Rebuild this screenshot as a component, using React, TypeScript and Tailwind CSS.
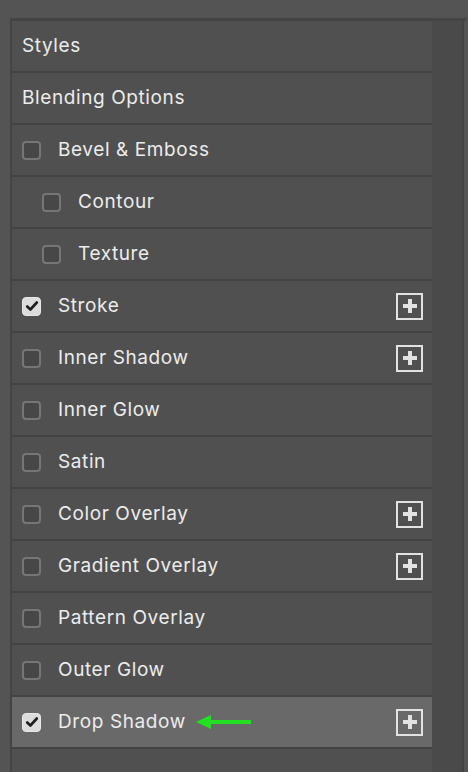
import React from 'react';

type Row = {
  label: string;
  check?: boolean;
  checked?: boolean;
  indent?: boolean;
  plus?: boolean;
  active?: boolean;
};

const rows: Row[] = [
  { label: 'Styles' },
  { label: 'Blending Options' },
  { label: 'Bevel & Emboss', check: true },
  { label: 'Contour', check: true, indent: true },
  { label: 'Texture', check: true, indent: true },
  { label: 'Stroke', check: true, checked: true, plus: true },
  { label: 'Inner Shadow', check: true, plus: true },
  { label: 'Inner Glow', check: true },
  { label: 'Satin', check: true },
  { label: 'Color Overlay', check: true, plus: true },
  { label: 'Gradient Overlay', check: true, plus: true },
  { label: 'Pattern Overlay', check: true },
  { label: 'Outer Glow', check: true },
  { label: 'Drop Shadow', check: true, checked: true, plus: true, active: true },
];

function Checkbox({ checked }: { checked?: boolean }) {
  if (checked) {
    return (
      <span className="w-[19px] h-[19px] rounded-[4px] bg-[#dcdcdc] border border-[#e8e8e8] flex items-center justify-center shrink-0">
        <svg viewBox="0 0 16 16" className="w-[14px] h-[14px]">
          <path d="M2.5 8.5 L6.2 12 L13.5 4" fill="none" stroke="#1e1e1e" strokeWidth="3" strokeLinecap="round" strokeLinejoin="round" />
        </svg>
      </span>
    );
  }
  return <span className="w-[19px] h-[19px] rounded-[4px] bg-[#474747] border-2 border-[#767676] shrink-0" />;
}

function PlusBox() {
  return (
    <span className="ml-auto w-[27px] h-[27px] border-2 border-[#e2e2e2] flex items-center justify-center">
      <svg viewBox="0 0 16 16" className="w-[16px] h-[16px]">
        <path d="M8 1 V15 M1 8 H15" stroke="#e2e2e2" strokeWidth="4" />
      </svg>
    </span>
  );
}

function Arrow() {
  return (
    <svg viewBox="0 0 56 16" className="w-[56px] h-[16px] ml-[10px]">
      <path d="M0 8 L15 1 L15 15 Z" fill="#22e022" />
      <path d="M12 8 H55" stroke="#22e022" strokeWidth="4" />
    </svg>
  );
}

export default function App() {
  return (
    <div
      className="w-[468px] h-[772px] bg-[#545454] overflow-hidden pt-[18px] pl-[10px]"
      style={{ fontFamily: 'Inter, "Liberation Sans", Arial, sans-serif' }}
    >
      <div className="flex h-full border-t-[3px] border-l-2 border-[#444444] w-[456px]">
        <div className="w-[420px] bg-[#505050] flex flex-col">
          {rows.map((r) => (
            <div
              key={r.label}
              className={`h-[52px] shrink-0 flex items-center border-b-2 border-[#434343] pr-[9px] ${
                r.active ? 'bg-[#696969]' : ''
              } ${r.indent ? 'pl-[30px]' : 'pl-[10px]'}`}
            >
              {r.check && <Checkbox checked={r.checked} />}
              <span
                className={`text-[19px] leading-none pb-[2px] tracking-[0.6px] text-[#ececec] ${r.check ? 'ml-[17px]' : ''}`}
              >
                {r.label}
              </span>
              {r.active && <Arrow />}
              {r.plus && <PlusBox />}
            </div>
          ))}
        </div>
        <div className="w-[32px] bg-[#4a4a4a] border-r-2 border-[#444444]" />
      </div>
    </div>
  );
}
